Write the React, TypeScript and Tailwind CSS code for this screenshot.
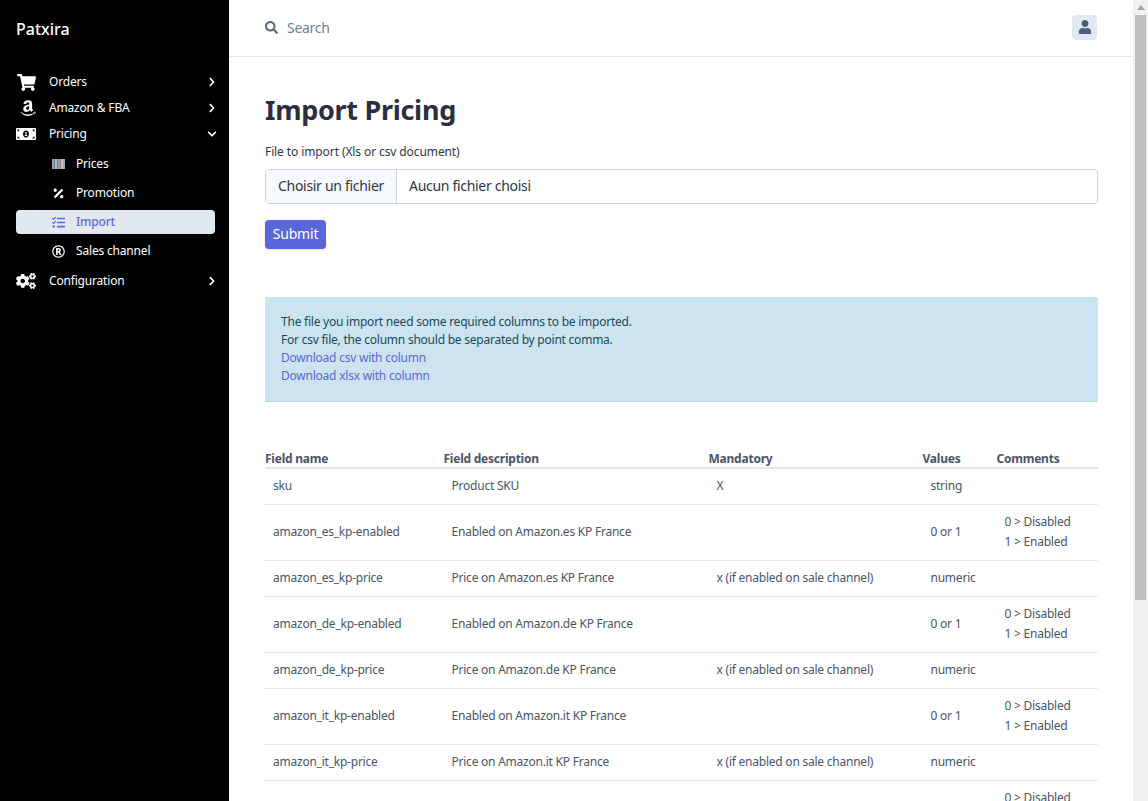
// Import Pricing page
import type { ReactNode } from "react"
import {
    FaShoppingCart,
    FaAmazon,
    FaMoneyBillAlt,
    FaPercentage,
    FaTasks,
    FaRegRegistered,
    FaCogs,
    FaChevronRight,
    FaChevronDown,
    FaSearch,
    FaUser,
} from "react-icons/fa"

// Top level sidebar row
const NavItem = ({
    icon,
    label,
    open,
    className,
}: {
    icon: ReactNode
    label: string
    open?: boolean
    className: string
}) => (
    <div className={`flex items-center pl-4 pr-[12px] text-white text-[12px] tracking-[-0.18px] ${className}`}>
        <span className="w-[33px] flex items-center">{icon}</span>
        <span className="flex-1">{label}</span>
        {open ? <FaChevronDown className="text-[10px]" /> : <FaChevronRight className="text-[10px]" />}
    </div>
)

// Nested sidebar row
const SubItem = ({
    icon,
    label,
    active,
}: {
    icon: ReactNode
    label: string
    active?: boolean
}) => (
    <div
        className={`ml-4 mr-[14px] h-6 flex items-center pl-9 rounded text-[12px] tracking-[-0.18px] ${
            active ? "bg-[#e2e8f0] text-[#5a67d8] font-medium" : "text-white"
        }`}
    >
        <span className="w-6 flex items-center">{icon}</span>
        <span>{label}</span>
    </div>
)

// Striped barcode icon of the Prices entry
const BarcodeIcon = () => (
    <svg width="13" height="10" viewBox="0 0 13 10">
        <rect x="0" width="2" height="10" fill="#8fa3ad" />
        <rect x="2" width="1" height="10" fill="#5f7f8a" />
        <rect x="3" width="2" height="10" fill="#b0b8c0" />
        <rect x="5" width="1" height="10" fill="#6d7f74" />
        <rect x="6" width="2" height="10" fill="#a09aa8" />
        <rect x="8" width="1" height="10" fill="#8a7f88" />
        <rect x="9" width="2" height="10" fill="#c0c4c8" />
        <rect x="11" width="2" height="10" fill="#9ca8b0" />
    </svg>
)

const rows = [
    ["sku", "Product SKU", "X", "string", false],
    ["amazon_es_kp-enabled", "Enabled on Amazon.es KP France", "", "0 or 1", true],
    ["amazon_es_kp-price", "Price on Amazon.es KP France", "x (if enabled on sale channel)", "numeric", false],
    ["amazon_de_kp-enabled", "Enabled on Amazon.de KP France", "", "0 or 1", true],
    ["amazon_de_kp-price", "Price on Amazon.de KP France", "x (if enabled on sale channel)", "numeric", false],
    ["amazon_it_kp-enabled", "Enabled on Amazon.it KP France", "", "0 or 1", true],
    ["amazon_it_kp-price", "Price on Amazon.it KP France", "x (if enabled on sale channel)", "numeric", false],
    ["amazon_uk_kp-enabled", "Enabled on Amazon.uk KP France", "", "0 or 1", true],
] as const

export default function App() {
    return (
        <div className="h-[801px] flex overflow-hidden bg-white font-['Noto_Sans',sans-serif]">
            {/* Sidebar */}
            <aside className="w-[229px] shrink-0 bg-black flex flex-col">
                <div className="h-[58px] pl-4 flex items-center text-white text-[16px] font-medium">Patxira</div>
                <div className="pt-[11px]">
                    <NavItem className="h-[26px]" icon={<FaShoppingCart className="text-[19px] ml-[1px]" />} label="Orders" />
                    <NavItem className="h-[26px]" icon={<FaAmazon className="text-lg ml-[3px]" />} label="Amazon & FBA" />
                    <NavItem className="h-[26px]" icon={<FaMoneyBillAlt className="text-xl" />} label="Pricing" open />
                    <div className="pt-[5px] flex flex-col gap-[5px]">
                        <SubItem icon={<BarcodeIcon />} label="Prices" />
                        <SubItem icon={<FaPercentage className="text-[13px]" />} label="Promotion" />
                        <SubItem active icon={<FaTasks className="text-[13px]" />} label="Import" />
                        <SubItem icon={<FaRegRegistered className="text-[13px]" />} label="Sales channel" />
                    </div>
                    <NavItem className="h-[26px] mt-[5px]" icon={<FaCogs className="text-xl" />} label="Configuration" />
                </div>
            </aside>

            {/* Main column */}
            <main className="flex-1 min-w-0 overflow-hidden">
                <header className="h-[57px] border-b border-[#e2e8f0] flex items-center justify-between pl-9 pr-[36px]">
                    <div className="flex items-center gap-[9px] text-[#718096] text-[14px] tracking-[-0.3px] -mt-px">
                        <FaSearch className="text-[13px] text-[#5a6b85]" />
                        <span>Search</span>
                    </div>
                    <div className="w-[25px] h-[25px] -mt-[2px] rounded bg-[#e2e8f0] flex items-center justify-center">
                        <FaUser className="text-[14px] text-[#4a5f80]" />
                    </div>
                </header>

                <div className="px-9 pr-[35px]">
                    <h1 className="mt-[35px] text-[27px] leading-9 font-bold text-[#2a2f3f] tracking-[-0.3px]">Import Pricing</h1>
                    <label className="block mt-[14px] text-[12px] leading-5 text-[#2d3748] tracking-[-0.1px]">File to import (Xls or csv document)</label>

                    {/* File input */}
                    <div className="mt-[7px] h-[35px] flex items-stretch border border-[#cbd5e0] rounded text-[14px] text-[#2d3748] tracking-[-0.3px]">
                        <span className="w-[131px] bg-[#f7fafc] border-r border-[#cbd5e0] rounded-l flex items-center justify-center pb-[2px]">Choisir un fichier</span>
                        <span className="pl-3 flex items-center pb-[2px]">Aucun fichier choisi</span>
                    </div>

                    <button className="mt-[16px] block h-[29px] w-[61px] rounded bg-[#5a67d8] text-white text-[14px] tracking-[-0.2px] shadow pb-[2px]">Submit</button>

                    {/* Info box */}
                    <div className="mt-[48px] h-[105px] bg-[#cce4f0] border-b border-[#bcd5e2] px-4 py-4 text-[12px] leading-[18px] text-[#1a4a5e] tracking-[-0.23px]">
                        <p>The file you import need some required columns to be imported.</p>
                        <p>For csv file, the column should be separated by point comma.</p>
                        <p className="text-[#5a67d8]">Download csv with column</p>
                        <p className="text-[#5a67d8]">Download xlsx with column</p>
                    </div>

                    {/* Columns table */}
                    <table className="mt-[48px] w-[833px] table-fixed text-[12px] text-[#4a5568] tracking-[-0.23px]">
                        <colgroup>
                            <col className="w-[178.5px]" />
                            <col className="w-[265px]" />
                            <col className="w-[214px]" />
                            <col className="w-[74px]" />
                            <col />
                        </colgroup>
                        <thead>
                            <tr className="border-b-2 border-[#e2e8f0] text-left font-bold">
                                <th className="h-[18px] leading-4 pt-[1px]">Field name</th>
                                <th className="leading-4 pt-[1px]">Field description</th>
                                <th className="leading-4 pt-[1px]">Mandatory</th>
                                <th className="leading-4 pt-[1px]">Values</th>
                                <th className="leading-4 pt-[1px]">Comments</th>
                            </tr>
                        </thead>
                        <tbody>
                            {rows.map((r) => (
                                <tr key={r[0]} className="border-b border-[#e2e8f0]">
                                    <td className="px-2 pt-[7px] pb-2 leading-5">{r[0]}</td>
                                    <td className="px-2 pt-[7px] pb-2 leading-5">{r[1]}</td>
                                    <td className="px-2 pt-[7px] pb-2 leading-5">{r[2]}</td>
                                    <td className="px-2 pt-[7px] pb-2 leading-5">{r[3]}</td>
                                    <td className="px-2 pt-[7px] pb-2 leading-5">
                                        {r[4] && (
                                            <>
                                                <div>0 &gt; Disabled</div>
                                                <div>1 &gt; Enabled</div>
                                            </>
                                        )}
                                    </td>
                                </tr>
                            ))}
                        </tbody>
                    </table>
                </div>
            </main>

            {/* Scrollbar */}
            <div className="w-[15px] shrink-0 bg-[#f0f0f0] flex flex-col items-center">
                <div className="h-[15px] flex items-center justify-center">
                    <div className="w-0 h-0 border-x-[4px] border-x-transparent border-b-[5px] border-b-[#a3a3a3]" />
                </div>
                <div className="w-[11px] h-[585px] bg-[#c0c0c0]" />
            </div>
        </div>
    )
}
